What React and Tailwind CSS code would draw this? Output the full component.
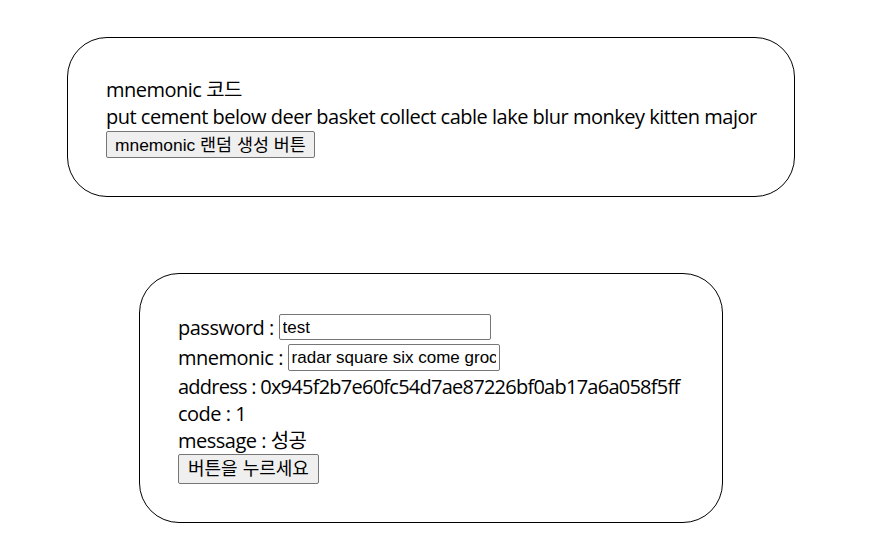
import React from "react";

export default function App() {
  return (
    <div className="w-[880px] h-[558px] bg-white text-black font-['Open_Sans','Noto_Sans_CJK_KR',sans-serif]">
      <div className="w-[862px] pt-[37px] flex flex-col items-center">
        <div className="w-[728px] h-[160px] border border-black rounded-[40px] px-[38px] pt-[38px] text-[20px] leading-[27px] tracking-[-0.5px]">
          <div>mnemonic 코드</div>
          <div className="whitespace-nowrap">put cement below deer basket collect cable lake blur monkey kitten major</div>
          <button className="block mt-[1px] h-[27px] px-[8px] bg-[#efefef] border border-[#767676] rounded-[2px] text-[17.4px] leading-[20px] tracking-normal font-['Liberation_Sans','Noto_Sans_CJK_KR',sans-serif]">
            mnemonic 랜덤 생성 버튼
          </button>
        </div>
        <div className="mt-[76px] w-[584px] h-[250px] border border-black rounded-[40px] px-[38px] pt-[38px] text-[20px] leading-[27px] tracking-[-0.5px]">
          <div className="h-[30px] flex items-center">
            <span>password :&nbsp;</span>
            <input
              readOnly
              value="test"
              className="w-[212px] h-[26px] px-[3px] border border-[#767676] rounded-[2px] text-[17px] tracking-normal font-['Liberation_Sans',sans-serif] outline-none"
            />
          </div>
          <div className="h-[31px] flex items-center">
            <span>mnemonic :&nbsp;</span>
            <input
              readOnly
              value="radar square six come grocery"
              className="w-[212px] h-[27px] px-[3px] border border-[#767676] rounded-[2px] text-[17px] tracking-normal font-['Liberation_Sans',sans-serif] outline-none"
            />
          </div>
          <div className="whitespace-nowrap tracking-[-0.75px]">address : 0x945f2b7e60fc54d7ae87226bf0ab17a6a058f5ff</div>
          <div>code : 1</div>
          <div>message : 성공</div>
          <button className="block h-[30px] px-[9px] bg-[#efefef] border border-[#767676] rounded-[2px] text-[18px] leading-[22px] tracking-normal font-['Liberation_Sans','Noto_Sans_CJK_KR',sans-serif]">
            버튼을 누르세요
          </button>
        </div>
      </div>
    </div>
  );
}
